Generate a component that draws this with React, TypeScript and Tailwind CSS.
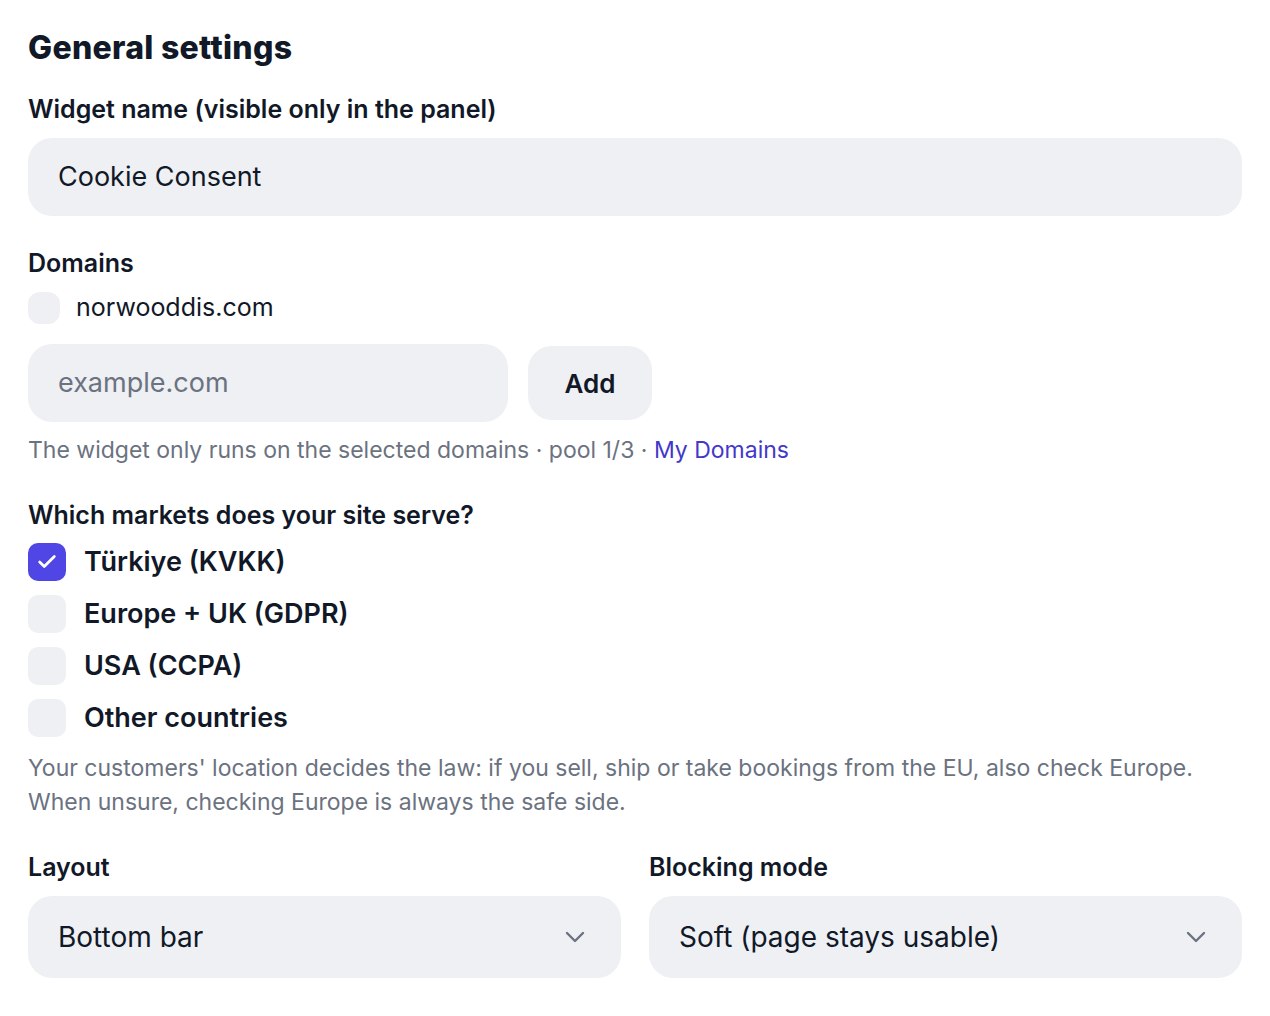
import { Check, ChevronDown } from "lucide-react";

type MarketOption = {
  label: string;
  checked: boolean;
};

const markets: MarketOption[] = [
  { label: "Türkiye (KVKK)", checked: true },
  { label: "Europe + UK (GDPR)", checked: false },
  { label: "USA (CCPA)", checked: false },
  { label: "Other countries", checked: false },
];

const Label = ({ children, className }: { children: React.ReactNode; className?: string }) => (
  <p className={`text-[25px] leading-8 font-semibold text-[#111827] ${className ?? ""}`}>{children}</p>
);

const SelectBox = ({ value }: { value: string }) => (
  <button className="mt-[13px] flex h-[82px] w-full items-center justify-between rounded-[24px] bg-[#eef0f4] pl-[30px] pr-[30px] text-left text-[28px] text-[#111827]">
    <span>{value}</span>
    <ChevronDown size={32} strokeWidth={1.8} className="text-[#6b7280]" />
  </button>
);

const App = () => {
  return (
    <div
      className="min-h-screen bg-white px-7 pt-[30px] text-[#111827]"
      style={{ fontFamily: "Inter, 'Noto Sans', sans-serif" }}
    >
      <h2 className="text-[32px] leading-9 font-extrabold tracking-[0.3px]">General settings</h2>

      <Label className="mt-[27px]">Widget name (visible only in the panel)</Label>
      <div className="mt-[13px] flex h-[78px] items-center rounded-[24px] bg-[#eef0f4] px-[30px] text-[27px]">
        Cookie Consent
      </div>

      <Label className="mt-[31px]">Domains</Label>
      <div className="mt-[13px] flex h-8 items-center gap-4">
        <div className="h-8 w-8 rounded-[12px] bg-[#eef0f4]"></div>
        <p className="text-[25px]">norwooddis.com</p>
      </div>

      <div className="mt-5 flex items-center gap-5">
        <div className="flex h-[78px] w-[480px] items-center rounded-[24px] bg-[#eef0f4] px-[30px] text-[27px] text-[#6b7280]">
          example.com
        </div>
        <button className="h-[74px] w-[124px] rounded-[24px] bg-[#eef0f4] text-[26px] font-semibold">Add</button>
      </div>

      <p className="mt-3 text-[23px] leading-8 text-[#6b7280]">
        The widget only runs on the selected domains · pool 1/3 ·{" "}
        <span className="text-[#4338ca]">My Domains</span>
      </p>

      <Label className="mt-[33px]">Which markets does your site serve?</Label>
      <div className="mt-3 flex flex-col gap-[14px]">
        {markets.map((market) => (
          <div key={market.label} className="flex h-[38px] items-center gap-[18px]">
            {market.checked ? (
              <div className="flex h-[38px] w-[38px] items-center justify-center rounded-[10px] bg-[#4f46e5]">
                <Check size={22} strokeWidth={3} className="text-white" />
              </div>
            ) : (
              <div className="h-[38px] w-[38px] rounded-[10px] bg-[#eef0f4]"></div>
            )}
            <p className="pt-px text-[27px] font-semibold">{market.label}</p>
          </div>
        ))}
      </div>

      <p className="mt-[14px] text-[23px] leading-[34px] text-[#6b7280]">
        Your customers' location decides the law: if you sell, ship or take bookings from the EU, also check Europe.
        <br />
        When unsure, checking Europe is always the safe side.
      </p>

      <div className="mt-8 grid grid-cols-2 gap-7">
        <div>
          <Label>Layout</Label>
          <SelectBox value="Bottom bar" />
        </div>
        <div>
          <Label>Blocking mode</Label>
          <SelectBox value="Soft (page stays usable)" />
        </div>
      </div>
    </div>
  );
};

export default App;
